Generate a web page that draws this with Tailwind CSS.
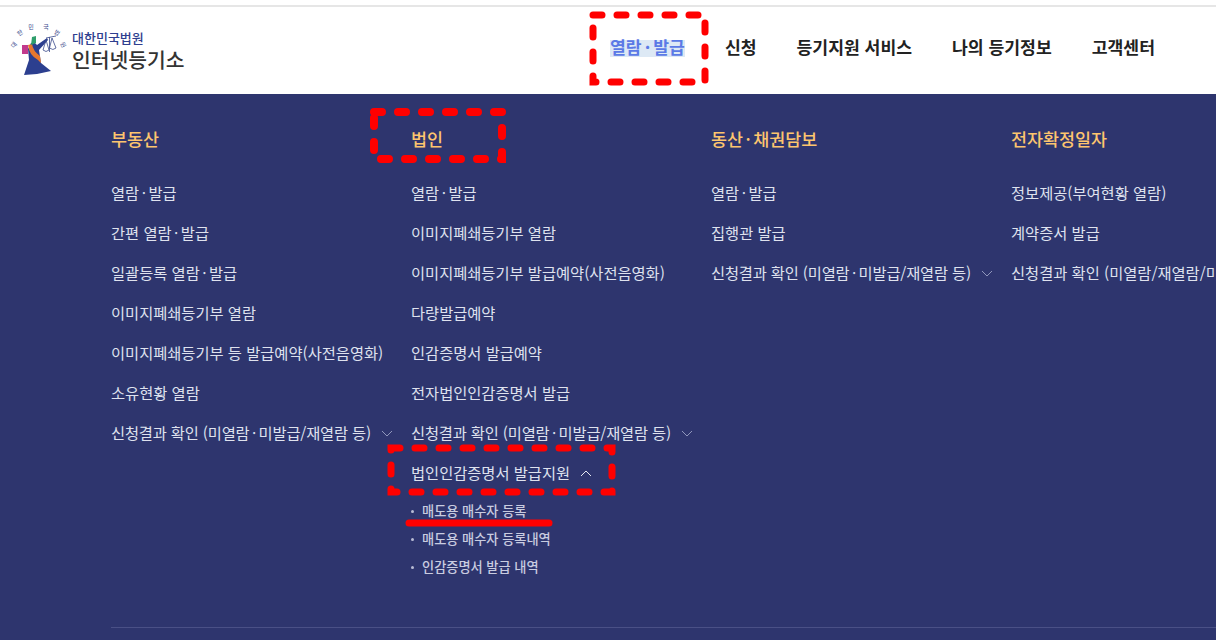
<!DOCTYPE html>
<html lang="ko">
<head>
    <meta charset="UTF-8">
    <script src="https://cdn.jsdelivr.net/npm/@tailwindcss/browser@4"></script>
    <title>인터넷등기소</title>
</head>
<body class="bg-white font-['Noto_Sans_CJK_KR','Noto_Sans',sans-serif]">
<div class="relative w-[1216px] h-[640px] overflow-hidden">

    <!-- Header -->
    <header class="mt-[5px] h-[89px] border-t-2 border-[#e6e6e6] bg-white flex items-center justify-between">
        <a class="flex items-center ml-[5px]">
            <svg width="66" height="56" viewBox="5 24 66 56">
                <g font-size="6" fill="#3a4a8c" text-anchor="middle">
                    <text x="14" y="48" transform="rotate(-50 14 46)">대</text>
                    <text x="20" y="36" transform="rotate(-35 20 34)">한</text>
                    <text x="31" y="30">민</text>
                    <text x="46" y="30">국</text>
                    <text x="57" y="36" transform="rotate(35 57 34)">법</text>
                    <text x="63" y="48" transform="rotate(60 63 46)">원</text>
                </g>
                <path d="M31 44 L35 44 L37 46 L47 39 L48 41 L39 51 L41 64 L51 72 L37 75 L24 76 L29 61 L28 50 Z" fill="#2c3f8f"/>
                <path d="M28 46 Q29 56 38 61 L41 64 L40 57 Q33 52 32 45 Z" fill="#e8782e"/>
                <rect x="22" y="46" width="6" height="9" fill="#c23a8c"/>
                <path d="M32 38 L36 37 L36 44 L31 46 Z" fill="#2f9e6c"/>
                <path d="M46 39 L56 37 M49.500 38 V53 M46 41 L43 51 Q46 54 49 51 Z M52 39 L49.500 49 Q53 52 56 49 Z" fill="none" stroke="#3a4a8c" stroke-width="0.800"/>
            </svg>
            <div class="ml-[1px] flex flex-col">
                <span class="text-[13px] leading-[16px] font-medium text-[#2f3f8f]">대한민국법원</span>
                <span class="text-[20.400px] leading-[26px] font-medium text-[#333]">인터넷등기소</span>
            </div>
        </a>
        <nav class="flex items-center mr-[61px] mb-[7px] text-[17.200px] font-bold text-[#222] gap-[40px]">
            <span class="text-[#5b7ae6] bg-[#dde9f5] h-[17px] mt-[3px] leading-[14px]">열람<span class="mx-[3px]">·</span>발급</span>
            <span>신청</span>
            <span>등기지원 서비스</span>
            <span>나의 등기정보</span>
            <span>고객센터</span>
        </nav>
    </header>

    <!-- Menu panel -->
    <div class="bg-[#2e356e] h-[546px] pl-[111px] pt-[33px]">
        <div class="grid grid-cols-[300px_300px_300px_300px] h-[501px] border-b border-[#4a5086] whitespace-nowrap text-[15.300px] leading-[24px] text-[#dfe2ee]">
            <ul>
                <li class="h-[53px] text-[17.400px] font-medium text-[#fdc56e]">부동산</li>
                <li class="h-[40px]">열람<span class="mx-[2.500px]">·</span>발급</li>
                <li class="h-[40px]">간편 열람<span class="mx-[2.500px]">·</span>발급</li>
                <li class="h-[40px]">일괄등록 열람<span class="mx-[2.500px]">·</span>발급</li>
                <li class="h-[40px]">이미지폐쇄등기부 열람</li>
                <li class="h-[40px]">이미지폐쇄등기부 등 발급예약(사전음영화)</li>
                <li class="h-[40px]">소유현황 열람</li>
                <li class="h-[40px] flex gap-[10px]"><span class="tracking-[-0.160px]">신청결과 확인 (미열람<span class="mx-[2.500px]">·</span>미발급/재열람 등)</span>
                    <svg width="12" height="21" viewBox="0 0 12 21" fill="none" stroke="#9096bb"><path d="M1 11 L6 16 L11 11"/></svg>
                </li>
            </ul>
            <ul>
                <li class="h-[53px] text-[17.400px] font-medium text-[#fdc56e]">법인</li>
                <li class="h-[40px]">열람<span class="mx-[2.500px]">·</span>발급</li>
                <li class="h-[40px]">이미지폐쇄등기부 열람</li>
                <li class="h-[40px]">이미지폐쇄등기부 발급예약(사전음영화)</li>
                <li class="h-[40px]">다량발급예약</li>
                <li class="h-[40px]">인감증명서 발급예약</li>
                <li class="h-[40px]">전자법인인감증명서 발급</li>
                <li class="h-[40px] flex gap-[10px]"><span class="tracking-[-0.160px]">신청결과 확인 (미열람<span class="mx-[2.500px]">·</span>미발급/재열람 등)</span>
                    <svg width="12" height="21" viewBox="0 0 12 21" fill="none" stroke="#9096bb"><path d="M1 11 L6 16 L11 11"/></svg>
                </li>
                <li class="h-[41px] flex gap-[10px]">법인인감증명서 발급지원
                    <svg width="12" height="21" viewBox="0 0 12 21" fill="none" stroke="#e4e6f0"><path d="M1 16 L6 11 L11 16"/></svg>
                </li>
                <li class="h-[28px] flex items-start text-[13.200px] leading-[20px] font-medium text-[#c9cce0]"><span class="w-[3px] h-[3px] mt-[9px] mr-[8px] rounded-full bg-[#b8bbd4]"></span>매도용 매수자 등록</li>
                <li class="h-[28px] flex items-start text-[13.200px] leading-[20px] font-medium text-[#c9cce0]"><span class="w-[3px] h-[3px] mt-[9px] mr-[8px] rounded-full bg-[#b8bbd4]"></span>매도용 매수자 등록내역</li>
                <li class="h-[28px] flex items-start text-[13.200px] leading-[20px] font-medium text-[#c9cce0]"><span class="w-[3px] h-[3px] mt-[9px] mr-[8px] rounded-full bg-[#b8bbd4]"></span>인감증명서 발급 내역</li>
            </ul>
            <ul>
                <li class="h-[53px] text-[17.400px] font-medium text-[#fdc56e]">동산<span class="mx-[2.500px]">·</span>채권담보</li>
                <li class="h-[40px]">열람<span class="mx-[2.500px]">·</span>발급</li>
                <li class="h-[40px]">집행관 발급</li>
                <li class="h-[40px] flex gap-[10px]"><span class="tracking-[-0.160px]">신청결과 확인 (미열람<span class="mx-[2.500px]">·</span>미발급/재열람 등)</span>
                    <svg width="12" height="21" viewBox="0 0 12 21" fill="none" stroke="#9096bb"><path d="M1 11 L6 16 L11 11"/></svg>
                </li>
            </ul>
            <ul>
                <li class="h-[53px] text-[17.400px] font-medium text-[#fdc56e]">전자확정일자</li>
                <li class="h-[40px]">정보제공(부여현황 열람)</li>
                <li class="h-[40px]">계약증서 발급</li>
                <li class="h-[40px]">신청결과 확인 (미열람/재열람/미발급 등)</li>
            </ul>
        </div>
    </div>

    <!-- Red annotations -->
    <svg class="absolute left-0 top-0 pointer-events-none" width="1216" height="640" fill="none" stroke="#ff0000" stroke-linecap="round">
        <path d="M593 15 H705 V82 H593 Z" stroke-width="7" stroke-dasharray="9 15"/>
        <path d="M374 112 H502 V159 H374 Z" stroke-width="8" stroke-dasharray="8 16"/>
        <path d="M391 448 H612 V492 H391 Z" stroke-width="7" stroke-dasharray="9 15"/>
        <path d="M409 523 H549" stroke-width="7"/>
    </svg>
</div>
</body>
</html>
